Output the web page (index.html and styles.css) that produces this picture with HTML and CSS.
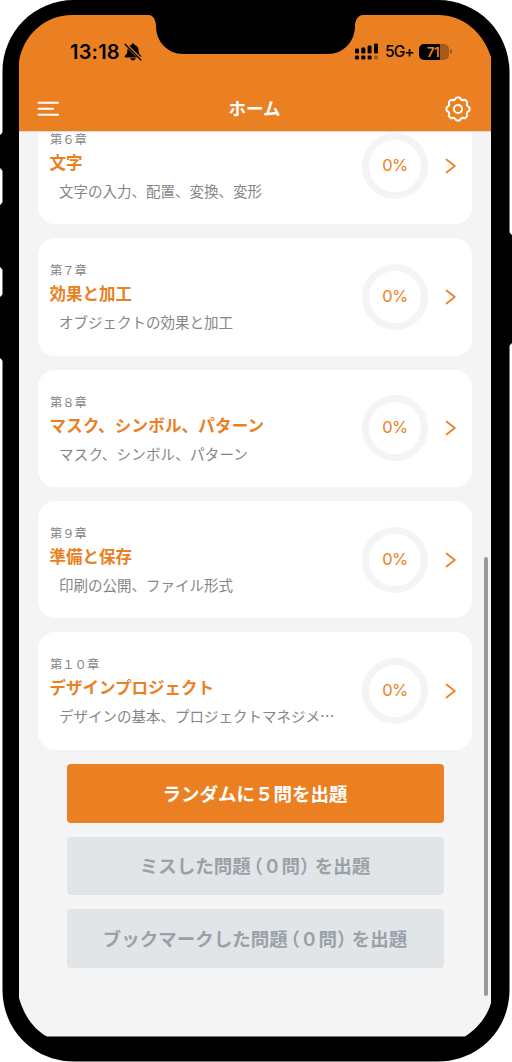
FILE: index.html
```html
<!DOCTYPE html>
<html lang="ja">
<head>
<meta charset="utf-8">
<title>ホーム</title>
<link rel="stylesheet" href="styles.css">
</head>
<body>
<div class="phone">
  <div class="screen">
    <header class="header">
      <div class="status">
        <span class="time">13:18</span>
        <svg class="bell" width="18" height="18" viewBox="0 0 18 18"><path d="M9 .5c-1 0-1.600.6-1.600 1.400C4.800 2.600 3.400 4.400 3.400 7c0 3-.8 4.200-2.300 5.500-.7.7-.4 1.900.6 1.900h14.600c1 0 1.300-1.200.6-1.900C15.400 11.200 14.600 10 14.600 7c0-2.600-1.400-4.400-4-5.100 0-.8-.6-1.400-1.600-1.400zM6.300 15.200c.2 1.400 1.300 2.200 2.700 2.200s2.500-.8 2.700-2.200z"/><path d="M1 .8 17.500 17" stroke="#eb8023" stroke-width="3.200"/><path d="M1.100 1.200 16.900 16.900" stroke="#000" stroke-width="1.400" stroke-linecap="round"/></svg>
        <svg class="signal" width="24" height="18" viewBox="0 0 24 18"><rect x="0" y="5.500" width="4" height="5" rx="1.300"/><rect x="6.300" y="4.500" width="4" height="6" rx="1.300"/><rect x="12.600" y="2.500" width="4" height="8" rx="1.300"/><rect x="19" y=".5" width="4" height="10" rx="1.300"/><rect x="0" y="12.500" width="4" height="4" rx="1.300"/><rect x="6.300" y="12.500" width="4" height="4" rx="1.300"/><rect x="12.600" y="12.500" width="4" height="4" rx="1.300"/><rect x="19" y="12.500" width="4" height="4" rx="1.300" opacity=".3"/></svg>
        <span class="network">5G+</span>
        <span class="battery"><span class="level">71</span></span>
        <span class="battery-tip"></span>
      </div>
      <nav class="nav">
        <svg width="22" height="16" viewBox="0 0 22 16" fill="none" stroke="#fff" stroke-width="2.100" stroke-linecap="round"><path d="M1.500 1.700h19.500M1.500 7.800h14.500M1.500 13.800h19.500"/></svg>
        <h1 class="page-title">ホーム</h1>
        <svg width="26" height="26" viewBox="-13 -13 26 26" fill="none" stroke="#fff" stroke-width="2" stroke-linecap="round">
          <circle r="4.100"/>
          <path id="tooth" d="M-3.790-9.150C-2.100-9.100-2.700-11.500-1.200-11.500H1.200C2.700-11.500 2.100-9.100 3.790-9.150"/>
          <use href="#tooth" transform="rotate(45)"/><use href="#tooth" transform="rotate(90)"/><use href="#tooth" transform="rotate(135)"/><use href="#tooth" transform="rotate(180)"/><use href="#tooth" transform="rotate(225)"/><use href="#tooth" transform="rotate(270)"/><use href="#tooth" transform="rotate(315)"/>
        </svg>
      </nav>
    </header>
    <main class="content">
      <section class="card">
        <div class="info"><p class="chapter">第６章</p><h2 class="title">文字</h2><p class="desc">文字の入力、配置、変換、変形</p></div>
        <div class="ring">0%</div>
        <svg class="chevron" width="12" height="16" viewBox="0 0 12 16"><path d="M1.500 1.500 9.800 8 1.500 14.500"/></svg>
      </section>
      <section class="card">
        <div class="info"><p class="chapter">第７章</p><h2 class="title">効果と加工</h2><p class="desc">オブジェクトの効果と加工</p></div>
        <div class="ring">0%</div>
        <svg class="chevron" width="12" height="16" viewBox="0 0 12 16"><path d="M1.500 1.500 9.800 8 1.500 14.500"/></svg>
      </section>
      <section class="card">
        <div class="info"><p class="chapter">第８章</p><h2 class="title spaced">マスク、シンボル、パターン</h2><p class="desc spaced">マスク、シンボル、パターン</p></div>
        <div class="ring">0%</div>
        <svg class="chevron" width="12" height="16" viewBox="0 0 12 16"><path d="M1.500 1.500 9.800 8 1.500 14.500"/></svg>
      </section>
      <section class="card">
        <div class="info"><p class="chapter">第９章</p><h2 class="title">準備と保存</h2><p class="desc">印刷の公開、ファイル形式</p></div>
        <div class="ring">0%</div>
        <svg class="chevron" width="12" height="16" viewBox="0 0 12 16"><path d="M1.500 1.500 9.800 8 1.500 14.500"/></svg>
      </section>
      <section class="card">
        <div class="info"><p class="chapter">第１０章</p><h2 class="title">デザインプロジェクト</h2><p class="desc">デザインの基本、プロジェクトマネジメ…</p></div>
        <div class="ring">0%</div>
        <svg class="chevron" width="12" height="16" viewBox="0 0 12 16"><path d="M1.500 1.500 9.800 8 1.500 14.500"/></svg>
      </section>
      <div class="actions">
        <button class="action primary">ランダムに５問を出題</button>
        <button class="action">ミスした問題<span class="open">（</span>０問<span class="close">）</span>を出題</button>
        <button class="action">ブックマークした問題<span class="open">（</span>０問<span class="close">）</span>を出題</button>
      </div>
    </main>
    <div class="scrollbar"></div>
  </div>
  <svg class="frame" width="512" height="1062" viewBox="0 0 512 1062">
    <path fill-rule="evenodd" d="M74 0H438C478 0 509.500 32 509.500 72V990C509.500 1030 478 1061.500 438 1061.500H74C34 1061.500 2.500 1030 2.500 990V72C2.500 32 34 0 74 0ZM19 62V998C24 1015 33 1029 47 1036.500H465C477 1029 487 1017 491 1003V57C483 32 463 15 438 15H363C358 15 355 20 355 26C355 42 343 54 328 54H183C168 54 156 42 156 26C156 20 153 15 149 15H72C45 15 23 35 19 62Z"/>
    <path d="M3 132 0 135V168L3 171ZM3 202 0 205V267L3 270ZM3 294 0 297V358L3 361ZM509 232 512 235V343L509 346Z"/>
  </svg>
</div>
</body>
</html>
```
FILE: styles.css
```css
* { box-sizing: border-box; }
body {
  margin: 0;
  background: #fff;
  font-family: "Noto Sans CJK JP", sans-serif;
}
h1, h2, p { margin: 0; }
.phone {
  position: relative;
  width: 512px;
  height: 1062px;
  padding: 15px 21px 25px 19px;
  overflow: hidden;
}
.frame { position: absolute; inset: 0; z-index: 2; pointer-events: none; }
.screen {
  position: relative;
  height: 1022px;
  overflow: hidden;
  border-radius: 40px 40px 20px 20px;
  background: #f4f4f4;
}
.header {
  position: relative;
  z-index: 1;
  height: 116px;
  background: #eb8023;
  box-shadow: 0 1px 0 #dadada;
}
.status {
  display: flex;
  align-items: center;
  height: 73px;
  padding-left: 51px;
  font-family: Inter, sans-serif;
}
.time { width: 54px; font-size: 20px; font-weight: 600; letter-spacing: .2px; white-space: nowrap; }
.bell { margin-right: 213px; flex: none; }
.signal { flex: none; margin-right: 6px; }
.network { width: 34px; font-size: 15.500px; font-weight: 500; letter-spacing: -.9px; }
.battery {
  width: 30px;
  height: 16px;
  padding-right: 2px;
  border-radius: 5px;
  background: linear-gradient(90deg, #000 0 70%, #a55a19 70%);
  color: #eb8023;
  font-size: 13.500px;
  font-weight: 600;
  line-height: 16px;
  text-align: center;
  letter-spacing: -.5px;
}
.battery-tip { width: 1.500px; height: 5px; margin-left: 1px; border-radius: 0 2px 2px 0; background: #a55a19; }
.nav {
  display: flex;
  justify-content: space-between;
  align-items: center;
  height: 41px;
  padding: 0 20px 0 18px;
}
.page-title { margin: -2px 0 0 5px; color: #fff; font-size: 17.500px; line-height: 26px; font-weight: 700; }
.content {
  display: flex;
  flex-direction: column;
  gap: 14.100px;
  margin-top: -24.100px;
  padding: 0 19px 0 19px;
}
.card {
  display: flex;
  align-items: center;
  height: 117.300px;
  padding: 0 15px 0 12px;
  border-radius: 17px;
  background: #fff;
}
.info { flex: 1; min-width: 0; align-self: flex-start; padding-top: 23px; white-space: nowrap; }
.chapter { color: #858585; font-size: 12.300px; line-height: 18px; }
.title { margin: 2px 0 0 -.5px; color: #eb8023; font-size: 16.500px; line-height: 24px; font-weight: 700; }
.desc { margin: 7px 0 0 9px; color: #858585; font-size: 14.500px; line-height: 20px; }
.spaced { letter-spacing: .2px; }
.ring {
  display: flex;
  align-items: center;
  justify-content: center;
  flex: none;
  width: 66px;
  height: 66px;
  margin-right: 17px;
  padding-bottom: 2px;
  border: 7px solid #f4f4f4;
  border-radius: 50%;
  color: #eb8023;
  font: 400 16.500px Inter, sans-serif;
  letter-spacing: -.6px;
}
.chevron { flex: none; fill: none; stroke: #eb8023; stroke-width: 1.700; stroke-linecap: round; stroke-linejoin: round; }
.actions { display: flex; flex-direction: column; gap: 14px; padding: 0 28.500px; }
.action {
  height: 58.700px;
  padding: 0 0 1px;
  border: 0;
  border-radius: 4px;
  background: #e1e5e8;
  color: #9aa1a8;
  font: 700 18.500px "Noto Sans CJK JP", sans-serif;
}
.primary { background: #eb8023; color: #fff; }
.open, .close { font-feature-settings: "halt"; }
.open { margin-left: 3px; }
.close { margin-right: 5.500px; }
.scrollbar {
  position: absolute;
  top: 542px;
  right: 3.500px;
  width: 3.500px;
  height: 438.500px;
  border-radius: 2px;
  background: #999;
}
```
